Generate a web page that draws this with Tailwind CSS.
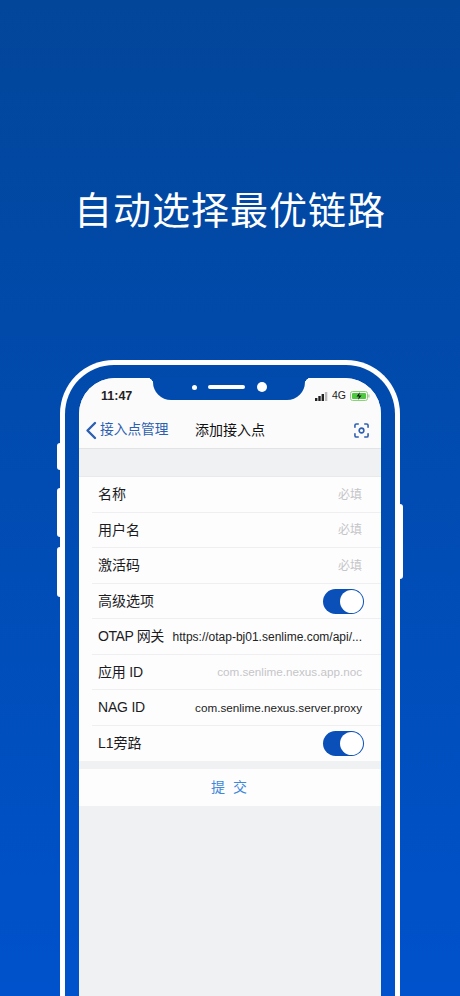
<!DOCTYPE html>
<html lang="zh-CN">
<head>
  <meta charset="UTF-8">
  <script src="https://cdn.jsdelivr.net/npm/@tailwindcss/browser@4"></script>
  <title>添加接入点</title>
</head>
<body class="m-0 overflow-hidden">
  <main class="relative flex flex-col items-center w-[460px] h-[996px] overflow-hidden bg-gradient-to-b from-[#02469a] to-[#0052cc] font-['Liberation_Sans','Noto_Sans_CJK_SC',sans-serif]">
    <h1 class="mt-[183px] h-[56px] leading-[56px] text-[38px] font-normal tracking-[1px] text-white">自动选择最优链路</h1>

    <!-- phone -->
    <div class="relative shrink-0 mt-[121px] w-[340px] h-[720px] px-[14px] pt-[13px] border-[5px] border-b-0 border-white rounded-t-[54px]">
      <span class="absolute left-[-8px] top-[78px] w-[3px] h-[27px] bg-white rounded-l-sm"></span>
      <span class="absolute left-[-8px] top-[123px] w-[3px] h-[49px] bg-white rounded-l-sm"></span>
      <span class="absolute left-[-8px] top-[182px] w-[3px] h-[50px] bg-white rounded-l-sm"></span>
      <span class="absolute right-[-8px] top-[139px] w-[3px] h-[75px] bg-white rounded-r-sm"></span>

      <div class="relative h-full rounded-t-[36px] bg-[#f0f1f3] overflow-hidden text-[#1c1c1e]">
        <!-- notch -->
        <div class="absolute left-[74px] top-0 z-10 flex items-start justify-center w-[152px] h-[22px] pt-[4px] rounded-b-[18px] bg-[#014bae]">
          <span class="absolute left-[-6px] top-0 w-[6px] h-[6px] bg-[radial-gradient(circle_at_0_100%,transparent_6px,#014bae_6.5px)]"></span>
          <span class="absolute right-[-6px] top-0 w-[6px] h-[6px] bg-[radial-gradient(circle_at_100%_100%,transparent_6px,#014bae_6.5px)]"></span>
          <div class="flex items-center h-[10px]">
            <span class="w-[5px] h-[5px] rounded-full bg-white"></span>
            <span class="w-[37px] h-[4px] ml-[11px] rounded-full bg-white"></span>
            <span class="w-[10px] h-[10px] ml-[12px] rounded-full bg-white"></span>
          </div>
        </div>

        <!-- status bar + nav -->
        <header class="bg-[#fbfbfc] border-b border-[#e2e3e5] h-[71px]">
          <div class="flex items-center justify-between h-[34px] pt-[2px] pl-[22px] pr-[11px]">
            <span class="text-[12.5px] font-bold text-[#222]">11:47</span>
            <div class="flex items-center gap-[4px]">
              <svg width="13" height="9" viewBox="0 0 13 9">
                <rect x="0" y="6" width="2.4" height="3" fill="#222"/>
                <rect x="3.3" y="4" width="2.4" height="5" fill="#222"/>
                <rect x="6.6" y="2" width="2.4" height="7" fill="#222"/>
                <rect x="9.9" y="0" width="2.4" height="9" fill="#bbb"/>
              </svg>
              <span class="text-[10.5px] text-[#222]">4G</span>
              <svg width="20" height="10" viewBox="0 0 20 10">
                <rect x="0.5" y="0.5" width="17" height="9" rx="2" fill="none" stroke="#8fcf7d"/>
                <rect x="2" y="2" width="14" height="6" rx="1" fill="#4cc93f"/>
                <rect x="18.3" y="3.5" width="1.2" height="3" fill="#9ccf8f"/>
                <path d="M10 1 6.5 5.4H9L8 9l3.6-4.6H9z" fill="#111"/>
              </svg>
            </div>
          </div>
          <nav class="relative flex items-center justify-between h-[37px] pl-[6px] pr-[12px]">
            <div class="flex items-center gap-[3px] text-[#2d5fb0]">
              <svg width="12" height="19" viewBox="0 0 12 19" fill="none" stroke="currentColor" stroke-width="2.4" stroke-linecap="round" stroke-linejoin="round"><path d="M10 2 2.5 9.5 10 17"/></svg>
              <span class="text-[13.7px]">接入点管理</span>
            </div>
            <span class="absolute left-[116px] text-[14px] text-[#111]">添加接入点</span>
            <svg width="15" height="15" viewBox="0 0 16 16" fill="none" stroke="#2d5fb0" stroke-width="1.7" stroke-linecap="round">
              <path d="M1 4.500V2.500A1.500 1.500 0 0 1 2.500 1H4.500M11.500 1H13.500A1.500 1.500 0 0 1 15 2.500V4.500M15 11.500V13.500A1.500 1.500 0 0 1 13.500 15H11.500M4.500 15H2.500A1.500 1.500 0 0 1 1 13.500V11.500"/>
              <circle cx="8" cy="8" r="2.500"/>
            </svg>
          </nav>
        </header>

        <!-- form -->
        <section class="mt-[27px] bg-[#fdfdfe] border-t border-[#e8e9eb]">
          <div class="flex items-center justify-between h-[36px] ml-[13px] pl-[6px] pr-[19px] border-b border-[#efeff1]">
            <span class="text-[14px]">名称</span><span class="text-[12px] text-[#c5c5c8]">必填</span>
          </div>
          <div class="flex items-center justify-between h-[35px] ml-[13px] pl-[6px] pr-[19px] border-b border-[#efeff1]">
            <span class="text-[14px]">用户名</span><span class="text-[12px] text-[#c5c5c8]">必填</span>
          </div>
          <div class="flex items-center justify-between h-[36px] ml-[13px] pl-[6px] pr-[19px] border-b border-[#efeff1]">
            <span class="text-[14px]">激活码</span><span class="text-[12px] text-[#c5c5c8]">必填</span>
          </div>
          <div class="flex items-center justify-between h-[35px] ml-[13px] pl-[6px] pr-[17px] border-b border-[#efeff1]">
            <span class="text-[14px]">高级选项</span>
            <span class="flex justify-end items-center w-[41px] h-[25px] p-[1px] rounded-full bg-[#0a50b8]"><span class="w-[23px] h-[23px] rounded-full bg-white"></span></span>
          </div>
          <div class="flex items-center justify-between h-[36px] ml-[13px] pl-[6px] pr-[19px] border-b border-[#efeff1]">
            <span class="text-[14px] tracking-[-0.4px]">OTAP 网关</span><span class="text-[12px] text-[#222]">https://otap-bj01.senlime.com/api/...</span>
          </div>
          <div class="flex items-center justify-between h-[35px] ml-[13px] pl-[6px] pr-[19px] border-b border-[#efeff1]">
            <span class="text-[14px] tracking-[-0.2px]">应用 ID</span><span class="text-[11.7px] text-[#c5c5c8]">com.senlime.nexus.app.noc</span>
          </div>
          <div class="flex items-center justify-between h-[36px] ml-[13px] pl-[6px] pr-[19px] border-b border-[#efeff1]">
            <span class="text-[14px] tracking-[-0.2px]">NAG ID</span><span class="text-[11.7px] text-[#222]">com.senlime.nexus.server.proxy</span>
          </div>
          <div class="flex items-center justify-between h-[35px] ml-[13px] pl-[6px] pr-[17px]">
            <span class="text-[14px]">L1旁路</span>
            <span class="flex justify-end items-center w-[41px] h-[25px] p-[1px] rounded-full bg-[#0a50b8]"><span class="w-[23px] h-[23px] rounded-full bg-white"></span></span>
          </div>
        </section>

        <button class="block w-full h-[37px] mt-[8px] bg-[#fdfdfe] text-[14px] tracking-[2px] text-[#3f87d8]">提 交</button>
      </div>
    </div>
  </main>
</body>
</html>
